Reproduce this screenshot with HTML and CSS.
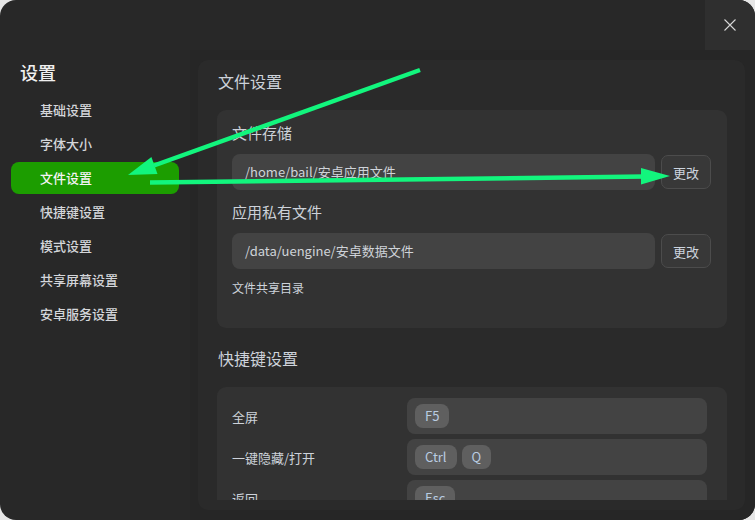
FILE: index.html
```html
<!DOCTYPE html>
<html lang="zh-CN">
<head>
<meta charset="utf-8">
<title>设置</title>
<link rel="stylesheet" href="styles.css">
</head>
<body>
<div class="window">
  <div class="titlebar">
    <div class="close">
      <svg width="12" height="12" viewBox="0 0 12 12"><path d="M0.5 0.5 L11.5 11.5 M11.5 0.5 L0.5 11.5" stroke="#d6d6d6" stroke-width="1.1" fill="none"/></svg>
    </div>
  </div>
  <div class="body">
    <aside class="sidebar">
      <div class="side-title">设置</div>
      <nav class="nav">
        <div class="nav-item">基础设置</div>
        <div class="nav-item">字体大小</div>
        <div class="nav-item active">文件设置</div>
        <div class="nav-item">快捷键设置</div>
        <div class="nav-item">模式设置</div>
        <div class="nav-item">共享屏幕设置</div>
        <div class="nav-item">安卓服务设置</div>
      </nav>
    </aside>
    <main class="main">
      <div class="panel">
        <div class="scroll">
          <h2 class="section-title">文件设置</h2>
          <section class="card files">
            <div class="field-label">文件存储</div>
            <div class="path-row">
              <div class="path">/home/bail/安卓应用文件</div>
              <button class="btn">更改</button>
            </div>
            <div class="field-label second">应用私有文件</div>
            <div class="path-row">
              <div class="path">/data/uengine/安卓数据文件</div>
              <button class="btn">更改</button>
            </div>
            <div class="small-label">文件共享目录</div>
          </section>
          <h2 class="section-title keys-title">快捷键设置</h2>
          <section class="card keys">
            <div class="key-row">
              <div class="key-label">全屏</div>
              <div class="key-field"><span class="chip">F5</span></div>
            </div>
            <div class="key-row">
              <div class="key-label">一键隐藏/打开</div>
              <div class="key-field"><span class="chip">Ctrl</span><span class="chip">Q</span></div>
            </div>
            <div class="key-row">
              <div class="key-label">返回</div>
              <div class="key-field"><span class="chip">Esc</span></div>
            </div>
          </section>
        </div>
      </div>
    </main>
  </div>
  <svg class="annot" width="755" height="520" viewBox="0 0 755 520">
    <line x1="420" y1="70" x2="154" y2="165.5" stroke="#12f57d" stroke-width="4.5"/>
    <polygon points="128,175 157.5,174 151.4,157" fill="#12f57d"/>
    <line x1="150" y1="182.5" x2="645" y2="176.5" stroke="#12f57d" stroke-width="4.5"/>
    <polygon points="670,176 641,168 641,184.5" fill="#12f57d"/>
  </svg>
</div>
</body>
</html>
```
FILE: styles.css
```css
* { box-sizing: border-box; }
html, body { margin: 0; padding: 0; }
body {
  width: 755px;
  height: 520px;
  background: #e6e6e6;
  font-family: "Noto Sans CJK SC", "Noto Sans", sans-serif;
  overflow: hidden;
}
.window {
  position: relative;
  width: 755px;
  height: 520px;
  background: #282828;
  border-radius: 16px;
  overflow: hidden;
  display: flex;
  flex-direction: column;
}
.titlebar {
  height: 50px;
  display: flex;
  justify-content: flex-end;
  flex-shrink: 0;
}
.close {
  width: 50px;
  height: 50px;
  background: #2f2f2f;
  display: flex;
  align-items: center;
  justify-content: center;
}
.close svg { display: block; }
.body {
  flex: 1;
  display: flex;
  min-height: 0;
}
.sidebar {
  width: 190px;
  flex-shrink: 0;
  padding: 9px 11px 0 11px;
}
.side-title {
  font-size: 18px;
  font-weight: 500;
  color: #f0f0f0;
  line-height: 26px;
  padding-left: 9px;
  margin-bottom: 9px;
}
.nav {
  display: flex;
  flex-direction: column;
  gap: 2px;
}
.nav-item {
  height: 32px;
  line-height: 31px;
  padding-left: 29px;
  font-size: 13px;
  font-weight: 500;
  color: #d4d6da;
  border-radius: 8px;
}
.nav-item.active {
  background: #1c9d00;
  color: #f4f4f4;
}
.main {
  flex: 1;
  background: #262626;
  padding: 10px 10px 10px 8px;
  min-width: 0;
}
.panel {
  height: 100%;
  background: #2a2a2a;
  border-radius: 10px;
  padding: 0 18px 10px 19px;
  display: flex;
  flex-direction: column;
}
.scroll {
  flex: 1;
  overflow: hidden;
}
.section-title {
  margin: 0;
  font-size: 16px;
  font-weight: 400;
  color: #cdd2da;
  line-height: 22px;
  padding: 10px 0 0 1px;
  height: 50px;
}
.keys-title {
  padding-top: 19px;
  height: 59px;
}
.card {
  background: #323232;
  border-radius: 9px;
}
.files {
  height: 218px;
  padding: 12px 16px 0 15px;
}
.field-label {
  font-size: 15px;
  color: #cdd2da;
  line-height: 22px;
  height: 32px;
}
.field-label.second {
  padding-top: 11px;
  height: 43px;
}
.path-row {
  display: flex;
  align-items: center;
  gap: 6px;
}
.path {
  flex: 1;
  height: 36px;
  line-height: 36px;
  background: #434343;
  border-radius: 8px;
  padding-left: 13px;
  font-size: 13px;
  color: #cfd3d9;
}
.btn {
  width: 50px;
  height: 34px;
  background: #383838;
  border: 1px solid #4c4c4c;
  border-radius: 7px;
  font-family: "Noto Sans CJK SC", sans-serif;
  font-size: 13px;
  color: #cdd4de;
  padding: 0;
}
.small-label {
  font-size: 12px;
  color: #cdd2da;
  line-height: 20px;
  padding-top: 9px;
}
.keys {
  padding: 11px 20px 20px 15px;
  display: flex;
  flex-direction: column;
  gap: 5px;
}
.key-row {
  display: flex;
  align-items: center;
}
.key-label {
  width: 175px;
  font-size: 13px;
  color: #cdd2da;
}
.key-field {
  flex: 1;
  height: 36px;
  background: #434343;
  border-radius: 8px;
  padding: 6px 8px;
  display: flex;
  gap: 5px;
}
.chip {
  height: 24px;
  line-height: 24px;
  padding: 0 10px;
  background: #5f5f5f;
  border-radius: 8px;
  font-size: 13px;
  color: #b9cce2;
}
.annot {
  position: absolute;
  left: 0;
  top: 0;
  pointer-events: none;
}
```
